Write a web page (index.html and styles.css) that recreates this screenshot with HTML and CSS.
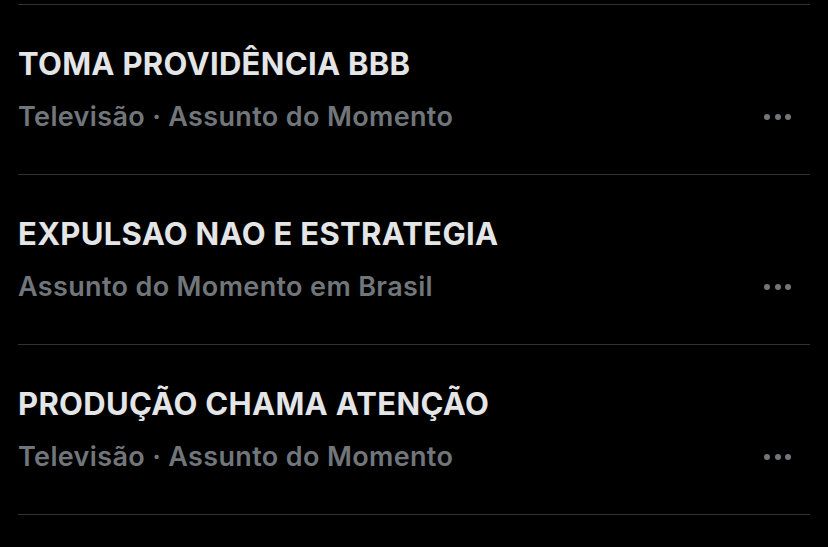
FILE: index.html
```html
<!DOCTYPE html>
<html lang="pt-BR">
<head>
<meta charset="utf-8">
<link rel="stylesheet" href="styles.css">
</head>
<body>
<ul class="trends">
  <li class="trend">
    <div class="text">
      <div class="title">TOMA PROVIDÊNCIA BBB</div>
      <div class="meta">Televisão · Assunto do Momento</div>
    </div>
    <span class="more"><i></i><i></i><i></i></span>
  </li>
  <li class="trend">
    <div class="text">
      <div class="title">EXPULSAO NAO E ESTRATEGIA</div>
      <div class="meta">Assunto do Momento em Brasil</div>
    </div>
    <span class="more"><i></i><i></i><i></i></span>
  </li>
  <li class="trend">
    <div class="text">
      <div class="title">PRODUÇÃO CHAMA ATENÇÃO</div>
      <div class="meta">Televisão · Assunto do Momento</div>
    </div>
    <span class="more"><i></i><i></i><i></i></span>
  </li>
</ul>
</body>
</html>
```
FILE: styles.css
```css
html, body {
  margin: 0;
  padding: 0;
  background: #000;
  height: 100%;
  overflow: hidden;
}
body {
  font-family: Inter, "Liberation Sans", sans-serif;
}
.trends {
  list-style: none;
  margin: 4px 18px 0 18px;
  padding: 0;
  border-top: 1px solid #2f3336;
}
.trend {
  display: flex;
  height: 169px;
  border-bottom: 1px solid #2f3336;
}
.text {
  flex: 1;
  padding: 39px 0 0 0;
}
.title {
  color: #e3e5e6;
  font-size: 31px;
  font-weight: 700;
  line-height: 40px;
  letter-spacing: 0.3px;
}
.meta {
  color: #71767b;
  font-size: 27px;
  font-weight: 600;
  line-height: 34px;
  letter-spacing: 0.35px;
  margin-top: 16px;
}
.more {
  display: flex;
  gap: 4.5px;
  align-self: flex-start;
  margin-top: 109px;
  margin-right: 19px;
}
.more i {
  width: 6px;
  height: 6px;
  border-radius: 50%;
  background: #71767b;
}
```
